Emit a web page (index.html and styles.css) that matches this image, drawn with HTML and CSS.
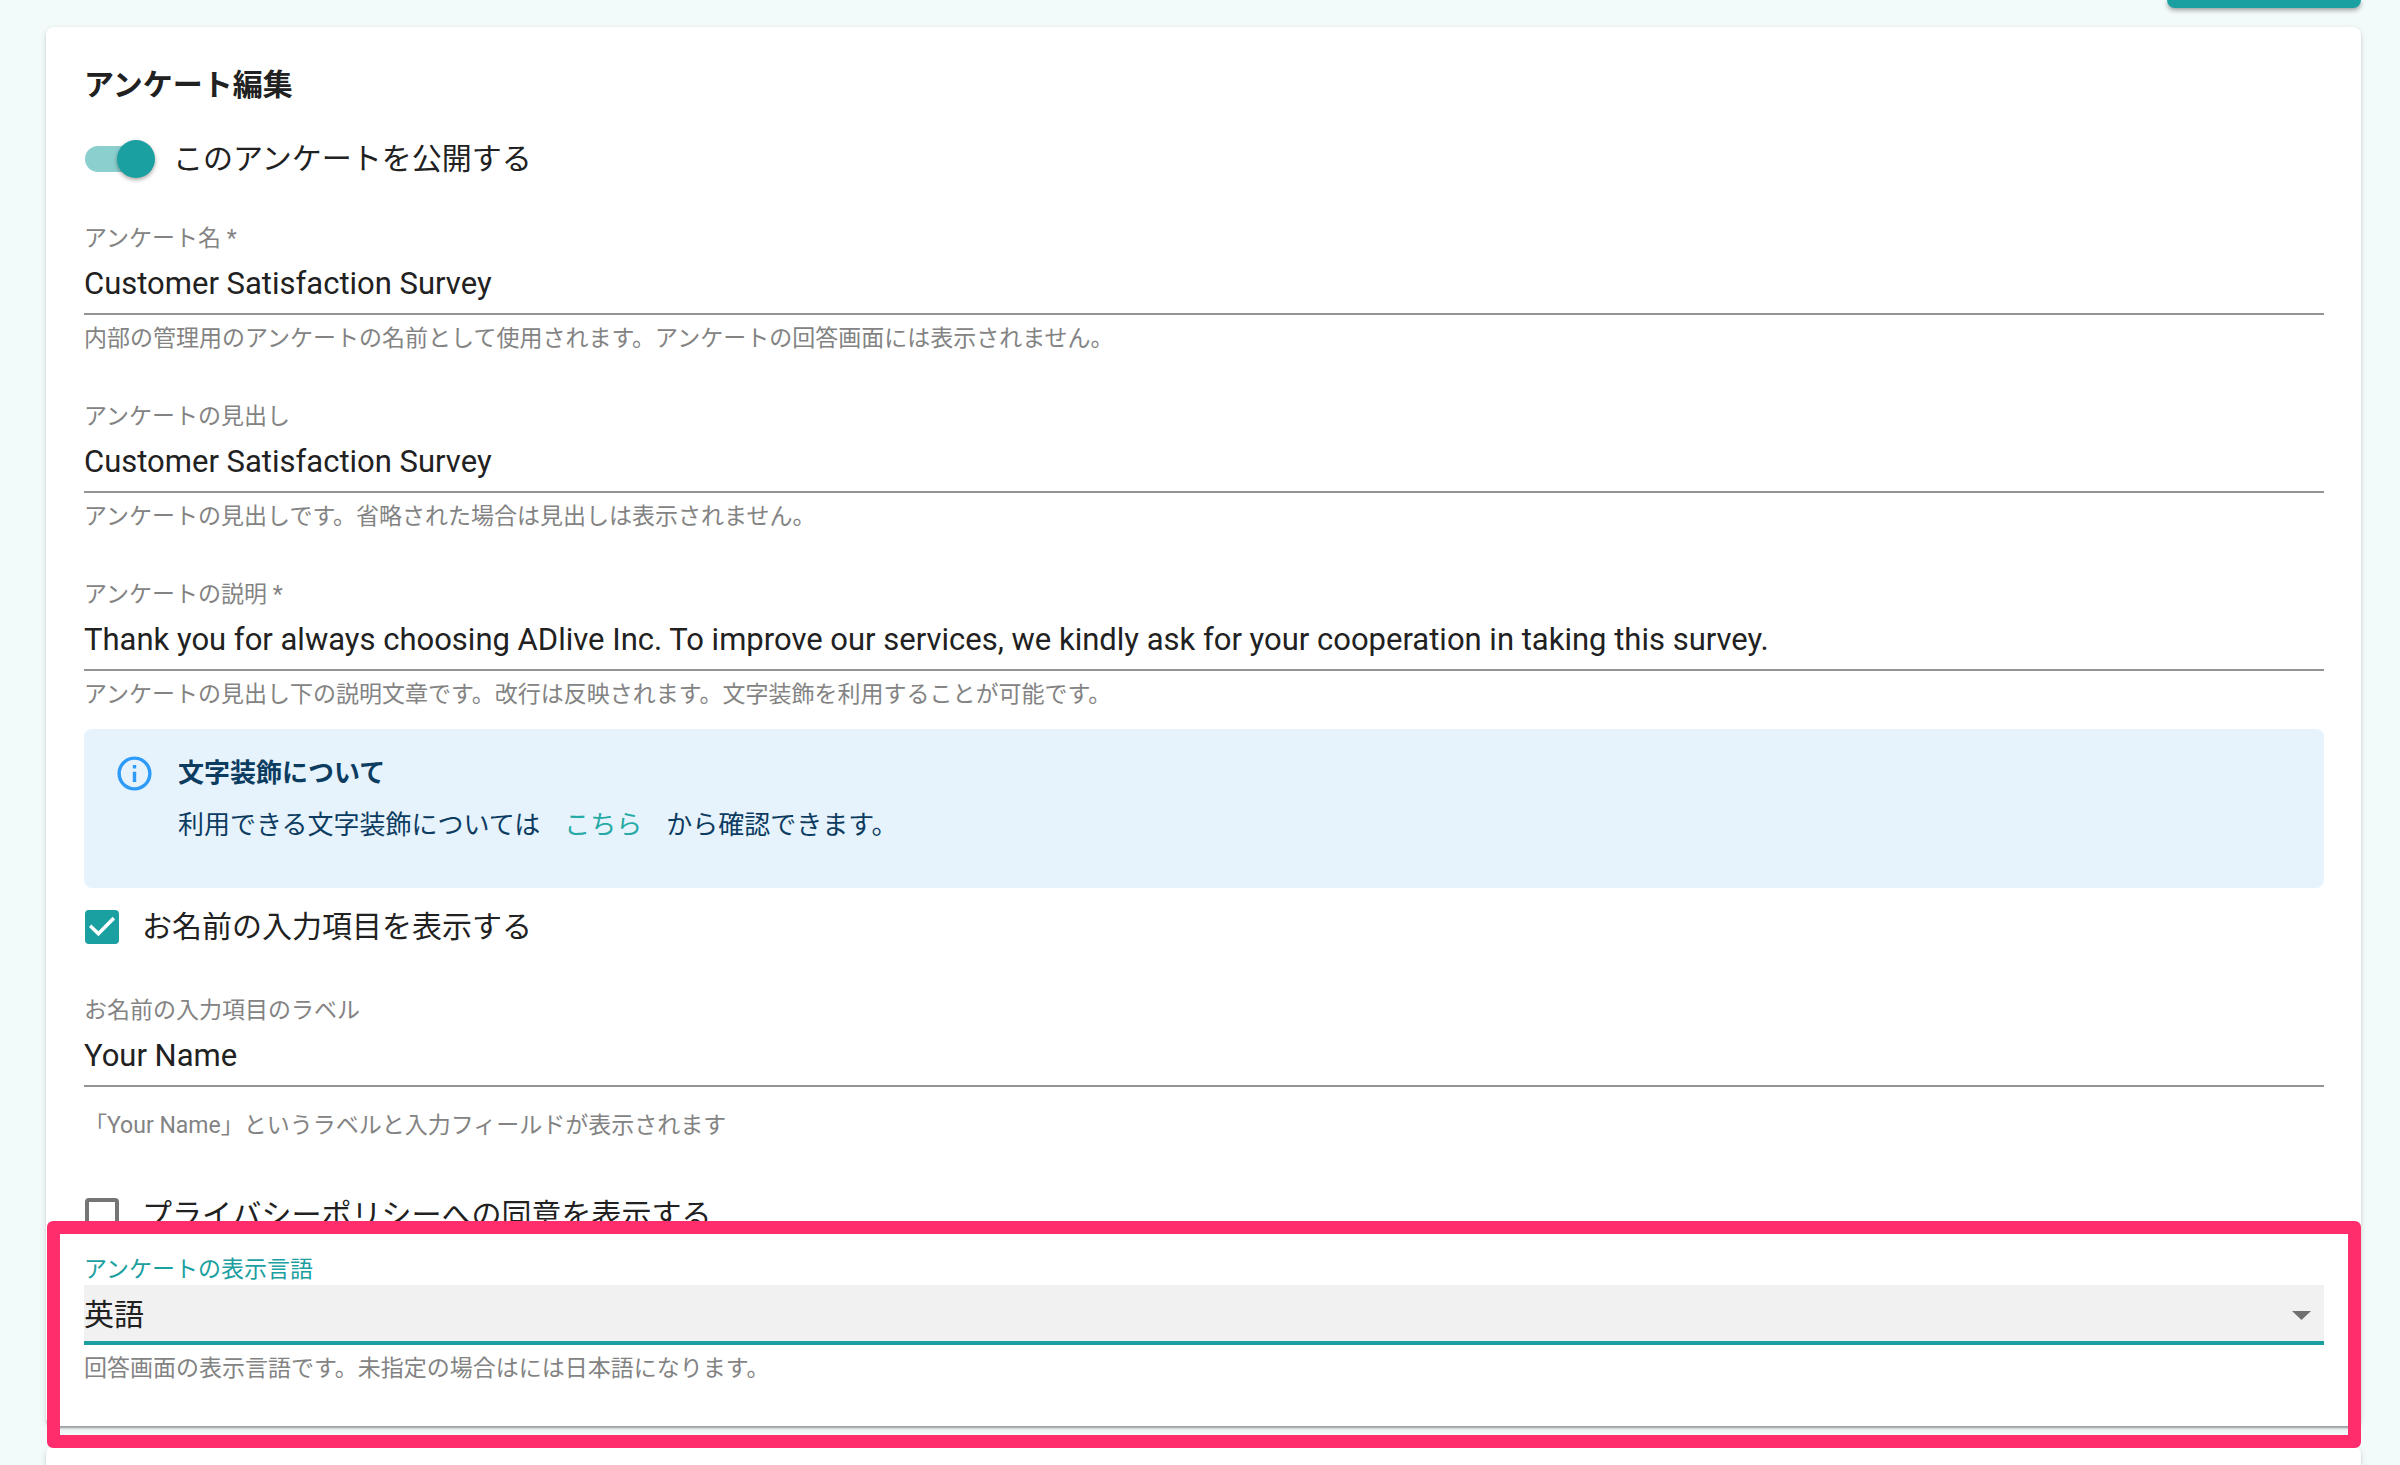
FILE: index.html
```html
<!DOCTYPE html>
<html lang="ja">
<head>
  <meta charset="UTF-8" />
  <meta name="viewport" content="width=device-width, initial-scale=1.0"/>
  <title>アンケート編集</title>
  <link rel="stylesheet" href="styles.css">
</head>
<body>
  <div class="toolbar">
    <button type="button" class="toolbar-button"></button>
  </div>

  <form class="card">
    <h1>アンケート編集</h1>

    <div class="option">
      <input type="checkbox" class="switch" id="published" role="switch" checked>
      <label for="published">このアンケートを公開する</label>
    </div>

    <div class="field">
      <label for="name">アンケート名 *</label>
      <input type="text" id="name" value="Customer Satisfaction Survey">
      <p class="helper">内部の管理用のアンケートの名前として使用されます。アンケートの回答画面には表示されません。</p>
    </div>

    <div class="field">
      <label for="heading">アンケートの見出し</label>
      <input type="text" id="heading" value="Customer Satisfaction Survey">
      <p class="helper">アンケートの見出しです。省略された場合は見出しは表示されません。</p>
    </div>

    <div class="field">
      <label for="description">アンケートの説明 *</label>
      <textarea id="description" rows="1">Thank you for always choosing ADlive Inc. To improve our services, we kindly ask for your cooperation in taking this survey.</textarea>
      <p class="helper">アンケートの見出し下の説明文章です。改行は反映されます。文字装飾を利用することが可能です。</p>
    </div>

    <div class="alert">
      <svg class="alert-icon" viewBox="0 0 24 24" aria-hidden="true">
        <path d="M11 7h2v2h-2zm0 4h2v6h-2zm1-9C6.480 2 2 6.480 2 12s4.480 10 10 10 10-4.480 10-10S17.520 2 12 2zm0 18c-4.410 0-8-3.590-8-8s3.590-8 8-8 8 3.590 8 8-3.590 8-8 8z"/>
      </svg>
      <div>
        <h2>文字装飾について</h2>
        <p>利用できる文字装飾については<a href="#">こちら</a>から確認できます。</p>
      </div>
    </div>

    <div class="option option-name">
      <input type="checkbox" class="checkbox" id="showName" checked>
      <label for="showName">お名前の入力項目を表示する</label>
    </div>

    <div class="field">
      <label for="nameLabel">お名前の入力項目のラベル</label>
      <input type="text" id="nameLabel" value="Your Name">
      <p class="helper helper-spaced">「Your Name」というラベルと入力フィールドが表示されます</p>
    </div>

    <div class="option option-privacy">
      <input type="checkbox" class="checkbox" id="showPrivacy">
      <label for="showPrivacy">プライバシーポリシーへの同意を表示する</label>
    </div>

    <div class="field field-language">
      <label for="language">アンケートの表示言語</label>
      <div class="select">
        <select id="language">
          <option>英語</option>
        </select>
      </div>
      <p class="helper">回答画面の表示言語です。未指定の場合はには日本語になります。</p>
    </div>

    <div class="highlight"></div>
  </form>

  <div class="card card-next"></div>
</body>
</html>
```

FILE: styles.css
```css
* { box-sizing: border-box; }
body {
  margin: 0;
  min-height: 100vh;
  padding: 0 39px 0 46px;
  background-color: #f2fbfa;
  font-family: Roboto, "Noto Sans CJK JP", sans-serif;
  color: #212121;
  display: flex;
  flex-direction: column;
}
h1, h2, p { margin: 0; }

.toolbar {
  display: flex;
  justify-content: flex-end;
  margin-bottom: 19px;
}
.toolbar-button {
  width: 194px;
  height: 8px;
  padding: 0;
  border: none;
  border-radius: 0 0 8px 8px;
  background-color: #1aa0a0;
  box-shadow: 0 2px 5px rgba(0, 0, 0, 0.4);
}

.card {
  position: relative;
  padding: 36px 37px 37px 38px;
  border-radius: 8px;
  background-color: #fff;
  box-shadow: 0 4px 2px -2px rgba(0, 0, 0, 0.2), 0 2px 2px rgba(0, 0, 0, 0.14), 0 2px 6px rgba(0, 0, 0, 0.12);
}
.card-next {
  flex: 1;
  margin-top: 20px;
  padding: 0;
  border-radius: 8px 8px 0 0;
}
h1 {
  margin-bottom: 33px;
  font-size: 30px;
  line-height: 44px;
  font-weight: 700;
}

/* switch and checkboxes */
.option {
  display: flex;
  align-items: center;
  height: 38px;
  margin-bottom: 46px;
  padding-left: 1px;
  font-size: 30px;
  line-height: 38px;
}
.option-name { margin: 20px 0 50px; }
.option-privacy { margin: 50px 0 21px; }
.switch, .checkbox {
  appearance: none;
  flex: none;
  margin: 0;
}
.switch {
  display: flex;
  align-items: center;
  width: 70px;
  height: 38px;
  margin-right: 18px;
}
.switch::before {
  content: "";
  flex: none;
  width: 64px;
  height: 26px;
  margin-right: -32px;
  border-radius: 13px;
  background-color: #8ccfcf;
}
.switch::after {
  content: "";
  flex: none;
  width: 38px;
  height: 38px;
  border-radius: 50%;
  background-color: #1aa0a0;
  box-shadow: 0 2px 4px rgba(0, 0, 0, 0.35);
}
.checkbox {
  width: 34px;
  height: 34px;
  margin-right: 23px;
  border: 4px solid #757575;
  border-radius: 4px;
}
.checkbox:checked {
  border-color: #1aa0a0;
  background-color: #1aa0a0;
}
.checkbox:checked::before {
  content: "";
  display: block;
  height: 100%;
  background-color: #fff;
  clip-path: polygon(36% 86%, 0 50%, 9% 40%, 36% 66%, 91% 11%, 100% 21%);
}

/* text fields */
.field {
  display: flex;
  flex-direction: column;
}
.field + .field { margin-top: 43px; }
.field label {
  font-size: 23px;
  line-height: 30px;
  color: #838383;
}
.field input, .field textarea, .field select {
  width: 100%;
  height: 61px;
  margin: 0;
  padding: 0;
  border: none;
  border-bottom: 2px solid #949494;
  border-radius: 0;
  background-color: transparent;
  font-family: inherit;
  font-size: 31px;
  line-height: 59px;
  color: inherit;
  outline: none;
}
.field textarea {
  display: block;
  resize: none;
  overflow: hidden;
}
.helper {
  margin-top: 4px;
  font-size: 23px;
  line-height: 40px;
  color: #838383;
}
.helper-spaced { margin-top: 19px; }

.field-language label { color: #1aa0a0; }
.select { position: relative; }
.field .select select {
  display: block;
  appearance: none;
  height: 60px;
  border-bottom: 4px solid #1aa0a0;
  background-color: #f1f1f1;
  font-size: 30px;
}
.select::after {
  content: "";
  position: absolute;
  top: 26px;
  right: 13px;
  width: 19px;
  height: 9px;
  background-color: #707070;
  clip-path: polygon(0 0, 100% 0, 50% 100%);
  pointer-events: none;
}

.alert {
  display: flex;
  gap: 23px;
  margin-top: 14px;
  padding: 24px 30px 43px;
  border-radius: 8px;
  background-color: #e6f3fd;
  color: #0d3c61;
  font-size: 26px;
}
.alert-icon {
  flex: none;
  width: 41px;
  height: 41px;
  fill: #2f9bf8;
}
.alert h2 {
  margin-bottom: 12px;
  font-size: 26px;
  line-height: 40px;
  font-weight: 700;
}
.alert p { line-height: 40px; }
.alert a {
  margin: 0 24px;
  color: #26aaa5;
  text-decoration: none;
}

/* frame around the language setting */
.highlight {
  position: absolute;
  z-index: 1;
  left: 1px;
  right: 0;
  bottom: -22px;
  height: 227px;
  border: 13px solid #ff2d6c;
  border-radius: 6px;
  pointer-events: none;
}
```
